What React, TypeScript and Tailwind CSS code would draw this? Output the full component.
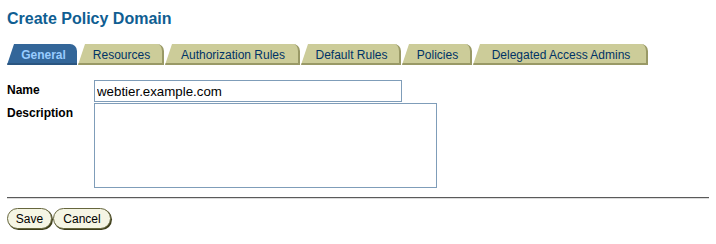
const tabs = [
  { label: "General", w: "w-[70px]", active: true },
  { label: "Resources", w: "w-[86px]" },
  { label: "Authorization Rules", w: "w-[135px]" },
  { label: "Default Rules", w: "w-[100px]" },
  { label: "Policies", w: "w-[70px]" },
  { label: "Delegated Access Admins", w: "w-[175px]" },
];

function Tab({ label, w, active }: { label: string; w: string; active?: boolean }) {
  return (
    <div
      className={`${w} h-[21px] pt-[4px] pl-[3px] text-center text-[12px] leading-[14px] rounded-tr-[7px] border-b-2 [clip-path:polygon(7px_0,100%_0,100%_100%,0_100%)] ${
        active
          ? "bg-[#336699] border-[#2a5580] text-[#99ccff] font-bold"
          : "bg-[#cccc99] border-[#999966] border-r-2 text-[#003366]"
      }`}
    >
      {label}
    </div>
  );
}

export default function App() {
  return (
    <div className="w-[716px] h-[244px] bg-white px-[7px] pt-[10px] font-['Liberation_Sans',Arial,sans-serif] text-black">
      <h1 className="text-[16px] leading-[18px] font-bold text-[#0f5e92]">Create Policy Domain</h1>

      <div className="mt-[16px] flex items-end gap-[1px]">
        {tabs.map((t) => (
          <Tab key={t.label} {...t} />
        ))}
      </div>

      <div className="mt-[15px] grid grid-cols-[87px_auto] gap-y-[1px]">
        <label className="pt-[3px] text-[12px] leading-[14px] font-bold">Name</label>
        <input
          defaultValue="webtier.example.com"
          className="block w-[308px] h-[22px] border border-[#7f9db9] px-[2px] text-[13.3px] outline-none font-['Liberation_Sans',Arial,sans-serif]"
        />
        <label className="pt-[3px] text-[12px] leading-[14px] font-bold">Description</label>
        <textarea className="block w-[343px] h-[85px] border border-[#7f9db9] resize-none outline-none" />
      </div>

      <div className="mt-[9px] h-px bg-[#5a5a5a]" />
      <div className="h-px bg-[#dcdcdc]" />

      <div className="mt-[9px] flex gap-[1px]">
        <button className="w-[45px] h-[21px] rounded-full bg-[#f5f5e4] border border-[#66663d] shadow-[1px_1px_0_#3d3d1a] text-[12px] leading-[14px] text-black">
          Save
        </button>
        <button className="w-[58px] h-[21px] rounded-full bg-[#f5f5e4] border border-[#66663d] shadow-[1px_1px_0_#3d3d1a] text-[12px] leading-[14px] text-black">
          Cancel
        </button>
      </div>
    </div>
  );
}
